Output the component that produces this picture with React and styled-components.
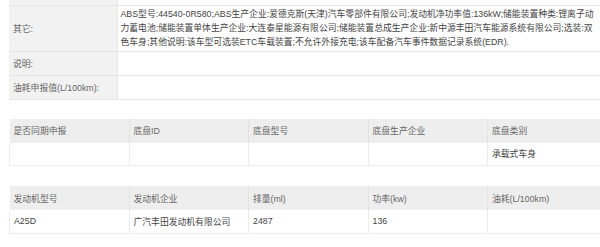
import React from 'react';
import styled, { createGlobalStyle } from 'styled-components';

const GlobalStyle = createGlobalStyle`
  html, body {
    margin: 0;
    padding: 0;
    background: #fff;
  }
  body {
    font-family: "Liberation Sans", "Noto Sans CJK SC", sans-serif;
    font-size: 8.8px;
    color: #444;
  }
`;

const Page = styled.div`
  width: 600px;
  height: 247px;
  overflow: hidden;
  padding-left: 9px;
  box-sizing: border-box;
`;

const Table = styled.table`
  width: ${(p) => p.$w || 598}px;
  border-collapse: collapse;
  table-layout: fixed;
  margin-bottom: ${(p) => p.$gap || 0}px;
`;

const Label = styled.td`
  width: 108px;
  background: #f2f2f2;
  color: #666;
  padding: 0 4px;
  border-bottom: 1px solid #e6e6e6;
  height: ${(p) => p.$h}px;
  box-sizing: border-box;
  vertical-align: middle;
  white-space: nowrap;
`;

const Value = styled.td`
  padding: 0 0 0 3px;
  border-bottom: 1px solid #e6e6e6;
  border-left: 1px solid #e6e6e6;
  font-size: 8.8px;
  line-height: 14px;
  color: #444;
  vertical-align: middle;
`;

const Head = styled.th`
  background: #eeeeee;
  color: #666;
  font-weight: normal;
  text-align: left;
  height: 24px;
  padding: 0 4px;
  border-left: 1px solid #e2e2e2;
  &:first-child {
    border-left: none;
  }
`;

const Cell = styled.td`
  height: 23px;
  padding: 0 4px;
  color: #444;
  border-left: 1px solid #ececec;
  border-bottom: 1px solid #ececec;
  box-sizing: border-box;
`;

const otherText =
  'ABS型号:44540-0R580;ABS生产企业:爱德克斯(天津)汽车零部件有限公司;发动机净功率值:136kW;储能装置种类:锂离子动力蓄电池;储能装置单体生产企业:大连泰星能源有限公司;储能装置总成生产企业:新中源丰田汽车能源系统有限公司;选装:双色车身;其他说明:该车型可选装ETC车载装置;不允许外接充电;该车配备汽车事件数据记录系统(EDR).';

const chassisHead = ['是否同期申报', '底盘ID', '底盘型号', '底盘生产企业', '底盘类别'];
const chassisRow = ['', '', '', '', '承载式车身'];
const engineHead = ['发动机型号', '发动机企业', '排量(ml)', '功率(kw)', '油耗(L/100km)'];
const engineRow = ['A25D', '广汽丰田发动机有限公司', '2487', '136', ''];

function Grid({ head, row, gap }) {
  return (
    <Table $gap={gap}>
      <thead>
        <tr>
          {head.map((h) => (
            <Head key={h}>{h}</Head>
          ))}
        </tr>
      </thead>
      <tbody>
        <tr>
          {row.map((c, i) => (
            <Cell key={i}>{c}</Cell>
          ))}
        </tr>
      </tbody>
    </Table>
  );
}

export default function App() {
  return (
    <>
      <GlobalStyle />
      <Page>
        <Table $w={592} $gap={19}>
          <tbody>
            <tr>
              <Label $h={5} />
              <Value />
            </tr>
            <tr>
              <Label $h={46}>其它:</Label>
              <Value>{otherText}</Value>
            </tr>
            <tr>
              <Label $h={24}>说明:</Label>
              <Value />
            </tr>
            <tr>
              <Label $h={24}>油耗申报值(L/100km):</Label>
              <Value />
            </tr>
          </tbody>
        </Table>
        <Grid head={chassisHead} row={chassisRow} gap={20} />
        <Grid head={engineHead} row={engineRow} />
      </Page>
    </>
  );
}
